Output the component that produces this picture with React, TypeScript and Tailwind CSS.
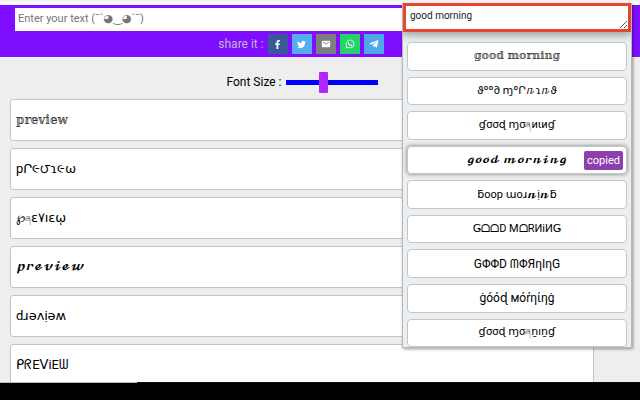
import type { ReactNode } from "react";
import { FaFacebookF, FaTwitter, FaWhatsapp, FaTelegramPlane } from "react-icons/fa";
import { MdEmail } from "react-icons/md";

const FONT =
  "font-['Roboto','DejaVu_Sans','DejaVu_Math_TeX_Gyre','Noto_Sans',sans-serif]";
const SCRIPT = "font-['DejaVu_Math_TeX_Gyre','DejaVu_Serif','DejaVu_Sans',serif]";
const DOUBLE = "font-['DejaVu_Serif','DejaVu_Sans',serif]";

const shares: { label: string; color: string; icon: ReactNode }[] = [
  { label: "Facebook", color: "bg-[#3b5998]", icon: <FaFacebookF size={9} /> },
  { label: "Twitter", color: "bg-[#55acee]", icon: <FaTwitter size={9} /> },
  { label: "Email", color: "bg-[#7d7d7d]", icon: <MdEmail size={10} /> },
  { label: "WhatsApp", color: "bg-[#25d366]", icon: <FaWhatsapp size={10} /> },
  { label: "Telegram", color: "bg-[#4fa8e8]", icon: <FaTelegramPlane size={10} /> },
];

const Small = ({ children }: { children: string }) => (
  <span className="text-[8px] text-[#555555]">{children}</span>
);
const ScriptN = () => <span className="text-[10px]">𝓷</span>;

const previews: { text: ReactNode; style: string }[] = [
  { text: "𝕡𝕣𝕖𝕧𝕚𝕖𝕨", style: `text-xs text-[#333333] ${DOUBLE}` },
  { text: "pՐ૯౮ɿ૯ω", style: "text-[13px]" },
  { text: <>℘<Small>ཞ</Small>ɛ۷ıɛῳ</>, style: "text-[13px]" },
  { text: "𝓹𝓻𝓮𝓿𝓲𝓮𝔀", style: `text-[11px] ${SCRIPT}` },
  { text: "dɹǝʌịǝʍ", style: "text-[13px]" },
  { text: "ᑭᖇEᐯiEᗯ", style: "text-[13px]" },
];

const results: { text: ReactNode; style: string; copied?: boolean }[] = [
  { text: "𝕘𝕠𝕠𝕕 𝕞𝕠𝕣𝕟𝕚𝕟𝕘", style: `text-[11px] text-[#333333] ${DOUBLE}` },
  { text: "ϑºº∂ ɱºՐ𝓃ɿ𝓃ϑ", style: "text-[11px]" },
  { text: <>ɠσσɖ ɱσ<Small>ཞ</Small>иιиɠ</>, style: "text-[11px]" },
  { text: "𝓰𝓸𝓸𝓭 𝓶𝓸𝓻𝓷𝓲𝓷𝓰", style: `text-[10px] ${SCRIPT}`, copied: true },
  { text: <>ƃoop ɯoɹ<ScriptN />ị<ScriptN />ƃ</>, style: "text-[11px]" },
  { text: "ǤᗝᗝD MᗝRИiИǤ", style: "text-[11px]" },
  { text: "GΦΦD ᗰΦЯηIηG", style: "text-xs" },
  { text: "ġóóɖ мóŕηίηġ", style: "text-xs" },
  { text: <>ɠσσɖ ɱσ<Small>ཞ</Small>ṉıṉɠ</>, style: "text-[11px]" },
];

export default function App() {
  return (
    <div className={`relative flex h-screen flex-col overflow-hidden bg-[#eeeeee] text-black ${FONT}`}>
      <div className="h-[5px] shrink-0 border-t-2 border-[#f1f3f6] bg-white" />
      <header className="shrink-0 bg-[#7f0dff] py-[3px] pr-[53px] pl-[15px]">
        <input
          aria-label="Your text"
          placeholder="Enter your text (¯`◕‿◕´¯)"
          className="block h-[23px] w-full bg-white px-[3px] pb-[3px] text-[11px] text-black outline-none placeholder:text-[#757575]"
        />
        <div className="mt-[3px] flex h-5 items-center justify-center gap-1">
          <span className="text-xs text-[#c4b5d6]">share it :</span>
          {shares.map((s) => (
            <button
              key={s.label}
              aria-label={s.label}
              className={`flex h-5 w-5 items-center justify-center text-white ${s.color}`}
            >
              {s.icon}
            </button>
          ))}
        </div>
      </header>
      <main className="min-h-0 flex-1 overflow-hidden pr-[46px] pl-[10px]">
        <div className="flex h-[42px] items-center justify-center gap-1 pt-2">
          <label htmlFor="size" className="text-xs">
            Font Size :
          </label>
          <input
            id="size"
            type="range"
            defaultValue={40}
            className="h-[5px] w-[92px] appearance-none bg-[#0000ff] [&::-webkit-slider-thumb]:h-[21px] [&::-webkit-slider-thumb]:w-[9px] [&::-webkit-slider-thumb]:appearance-none [&::-webkit-slider-thumb]:rounded-[1px] [&::-webkit-slider-thumb]:bg-[#b026ff]"
          />
        </div>
        <ul className="flex flex-col gap-[7px]">
          {previews.map((p, i) => (
            <li
              key={i}
              className={`flex h-[42px] shrink-0 items-center rounded-[3px] border border-[#c4c4c4] bg-white px-[5px] whitespace-nowrap ${p.style}`}
            >
              <span>{p.text}</span>
            </li>
          ))}
        </ul>
      </main>
      <footer className="flex h-[18px] shrink-0 flex-col bg-black">
        <div className="flex h-px">
          <div className="w-[137px] bg-[#bdbdbd]" />
          <div className="flex-1 bg-[#020b20]" />
        </div>
      </footer>

      <aside className="absolute top-[3px] right-[8px] flex h-[345px] w-[230px] flex-col overflow-hidden border border-t-0 border-[#b5b8ba] bg-[#eceff1] shadow-[1px_1px_3px_rgba(0,0,0,0.4)]">
        <div className="-mx-px shrink-0 bg-[#e8452f] px-1 py-[3px] shadow-[0_3px_8px_rgba(0,0,0,0.35)]">
          <textarea
            aria-label="Text to style"
            defaultValue="good morning"
            className="block h-[23px] w-full bg-white px-1 py-[2px] text-[10px] leading-4 text-[#222222] outline-none"
          />
        </div>
        <div className="flex min-h-0 flex-1 flex-col gap-[6px] px-1 pt-[10px]">
          {results.map((r, i) => (
            <button
              key={i}
              className={`relative min-h-0 flex-1 rounded-[4px] border border-[#c2c6c8] bg-white leading-4 whitespace-nowrap ${r.copied ? "shadow-[0_0_4px_rgba(0,0,0,0.5)]" : ""} ${r.style}`}
            >
              {r.text}
              {r.copied && (
                <span
                  className={`absolute top-1 right-[3px] rounded-[2px] bg-[#8e3fae] px-[3px] text-[11px] leading-[19px] text-white ${FONT}`}
                >
                  copied
                </span>
              )}
            </button>
          ))}
        </div>
      </aside>
    </div>
  );
}
